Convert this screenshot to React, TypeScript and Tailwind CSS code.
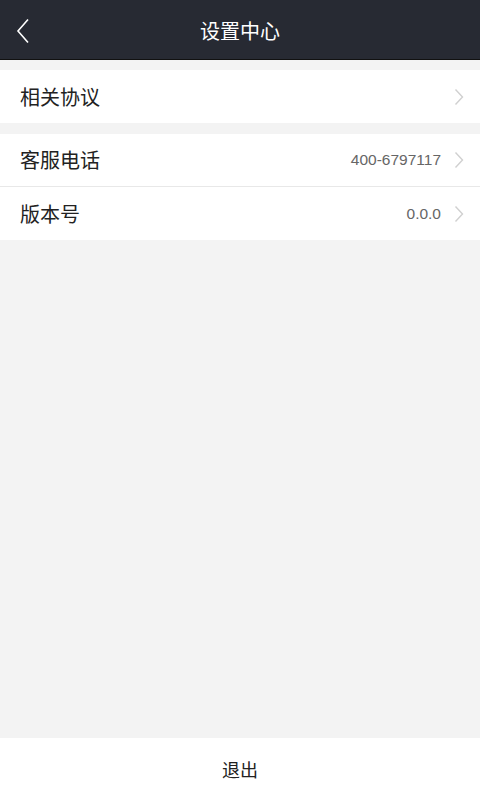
import React from "react";

const Chevron = () => (
  <svg width="10" height="18" viewBox="0 0 10 18" fill="none" className="ml-[13px]">
    <path d="M1.5 1.5L8.5 9L1.5 16.5" stroke="#d0d0d0" strokeWidth="1.4" />
  </svg>
);

const Row = ({ label, value, border }: { label: string; value?: string; border?: boolean }) => (
  <div className={`flex h-[53px] items-center bg-white pl-[20px] pr-[16px] ${border ? "border-b border-[#e8e8e8]" : ""}`}>
    <span className="flex-1 text-[20px] text-[#222]">{label}</span>
    {value && (
      <span className="text-[15.5px] text-[#666]" style={{ fontFamily: '"Liberation Sans", sans-serif' }}>
        {value}
      </span>
    )}
    <Chevron />
  </div>
);

export default function App() {
  return (
    <div
      className="flex h-[800px] w-[480px] flex-col bg-[#f3f3f3]"
      style={{ fontFamily: '"Noto Sans CJK SC", "Liberation Sans", sans-serif' }}
    >
      <div className="relative flex h-[60px] items-center justify-center border-b border-[#111] bg-[#272a33] pt-[3px]">
        <svg width="16" height="26" viewBox="0 0 16 26" fill="none" className="absolute left-[15px] top-[18px]">
          <path d="M13 1.5L3 13L13 24.5" stroke="#ffffff" strokeWidth="1.6" />
        </svg>
        <span className="text-[20px] text-white">设置中心</span>
      </div>
      <div className="mt-[10px]">
        <Row label="相关协议" />
      </div>
      <div className="mt-[11px]">
        <Row label="客服电话" value="400-6797117" border />
        <Row label="版本号" value="0.0.0" />
      </div>
      <div className="flex-1" />
      <div className="flex h-[62px] items-center justify-center bg-white">
        <span className="text-[18px] text-[#222]">退出</span>
      </div>
    </div>
  );
}
